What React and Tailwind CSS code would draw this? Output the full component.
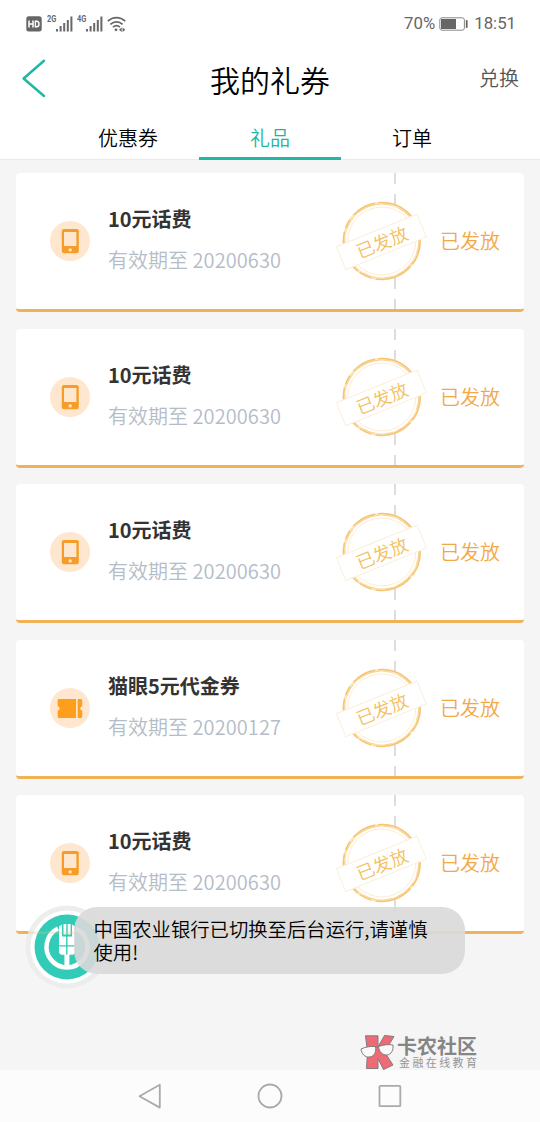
import React from "react";

const coupons = [
  { title: "10元话费", date: "20200630", icon: "phone" },
  { title: "10元话费", date: "20200630", icon: "phone" },
  { title: "10元话费", date: "20200630", icon: "phone" },
  { title: "猫眼5元代金券", date: "20200127", icon: "ticket" },
  { title: "10元话费", date: "20200630", icon: "phone" },
];

function Signal({ label }) {
  return (
    <div className="flex h-4 w-[26px]">
      <span className="mt-[-1px] h-[9px] w-[9px] origin-left scale-x-[0.82] font-['Roboto','Noto_Sans_CJK_SC',sans-serif] text-[9px] leading-[9px] font-bold text-[#666]">
        {label}
      </span>
      <svg width="17" height="16" viewBox="0 0 17 16" fill="#686868" className="shrink-0">
        <rect x="0" y="13" width="2" height="2.5" />
        <rect x="3.6" y="10" width="2" height="5.5" />
        <rect x="7.2" y="7" width="2" height="8.5" />
        <rect x="10.8" y="4" width="2" height="11.5" />
        <rect x="14.4" y="0.5" width="2" height="15" />
      </svg>
    </div>
  );
}

function StatusBar() {
  return (
    <div className="flex h-[47px] items-center pr-[24px] pl-[26px] text-[#666]">
      <svg width="16" height="16" viewBox="0 0 16 16" className="mt-px">
        <rect x="0.3" y="0.3" width="15.4" height="15.2" rx="2.5" fill="#666" />
        <path d="M3 4.5v7M7 4.5v7M3 8h4" stroke="#fff" strokeWidth="1.5" fill="none" />
        <path d="M9.4 5.2v5.6h1.2c1.7 0 2.4-.9 2.4-2.8s-.7-2.8-2.4-2.8z" stroke="#fff" strokeWidth="1.4" fill="none" />
      </svg>
      <div className="ml-[5px]"><Signal label="2G" /></div>
      <div className="ml-[4px]"><Signal label="4G" /></div>
      <svg width="19" height="16" viewBox="0 0 19 16" className="ml-[4px]" fill="none" stroke="#666" strokeWidth="1.7">
        <path d="M.8 5.200c5-4.800 12.400-4.800 17.400 0M3.400 8.400c3.600-3.500 8.600-3.500 12.200 0M6 11.200c2.100-2 4.900-2 7 0" />
        <circle cx="9" cy="13.8" r="1.4" fill="#666" stroke="none" />
        <path d="M14.700 11.400 12 13.700l2.700 2.300zM15.600 11.400l2.700 2.300-2.700 2.300z" fill="#666" stroke="none" />
      </svg>
      <div className="ml-auto flex items-center font-['Roboto','Noto_Sans_CJK_SC',sans-serif] text-[16.8px] leading-none">
        <span>70%</span>
        <svg width="29" height="14" viewBox="0 0 29 14" className="mt-px mr-[6px] ml-[4px]">
          <rect x="0.8" y="0.8" width="24.6" height="12.4" rx="2.2" fill="#fff" stroke="#888" />
          <rect x="2" y="2" width="15" height="10" fill="#666" />
          <rect x="26.8" y="3" width="1.8" height="8" rx="0.8" fill="#666" />
        </svg>
        <span>18:51</span>
      </div>
    </div>
  );
}

function Header() {
  return (
    <header className="grid h-[68px] grid-cols-[120px_1fr_120px] items-center">
      <svg width="26" height="40" viewBox="0 0 26 40" className="mt-[-6px] ml-[21px]" fill="none" stroke="#22b6a4" strokeWidth="2.5" strokeLinecap="round" strokeLinejoin="round">
        <path d="M23 2.8 2.6 20.500 23 38" />
      </svg>
      <h1 className="mt-[-4px] text-center text-[30px] leading-[44px] font-[350] text-black">我的礼券</h1>
      <span className="mt-[-7px] pr-[21px] text-right text-[20px] leading-7 font-[350] text-[#555]">兑换</span>
    </header>
  );
}

function Tabs() {
  return (
    <nav className="flex h-[45px] justify-center border-b border-[#e9e9e9] text-[20px] leading-[45px] font-[350] text-black">
      <span className="w-[142px] text-center">优惠券</span>
      <span className="mb-[-1px] h-[45px] w-[142px] border-b-3 border-[#22b6a4] text-center text-[#20b5a2]">礼品</span>
      <span className="w-[142px] text-center">订单</span>
    </nav>
  );
}

function CouponIcon({ type }) {
  return (
    <svg width="40" height="40" viewBox="0 0 40 40">
      <circle cx="20" cy="20" r="20" fill="#ffe6cf" />
      {type === "phone" ? (
        <g>
          <rect x="11.8" y="8" width="17" height="24.2" rx="2.2" fill="#f69d27" />
          <rect x="14" y="11" width="12.4" height="14" rx="0.6" fill="#ffe6cf" />
          <circle cx="20.2" cy="28.9" r="1.7" fill="#ffe6cf" />
        </g>
      ) : (
        <g fill="#ff9d1d">
          <path d="M9 11h17v19H9a1.300 1.300 0 0 1-1.300-1.300v-6.200a2 2 0 0 0 0-4v-6.200A1.300 1.300 0 0 1 9 11z" />
          <path d="M27.700 11h3a1.500 1.500 0 0 1 1.500 1.500v6a2 2 0 0 0 0 4v6a1.500 1.500 0 0 1-1.500 1.500h-3z" />
        </g>
      )}
    </svg>
  );
}

function Stamp() {
  return (
    <svg width="92" height="82" viewBox="0 0 92 82" className="absolute top-[27px] left-[320px]">
      <circle cx="45.8" cy="41" r="37.8" fill="#fff" stroke="#fde6bd" strokeWidth="3" />
      <circle cx="45.8" cy="41" r="38.4" fill="none" stroke="#f5c577" strokeWidth="1.5" strokeDasharray="25 3 38 5 13 2 44 4 9 6" />
      <circle cx="45.8" cy="41" r="37" fill="none" stroke="#f8d08c" strokeWidth="0.9" strokeDasharray="13 8 22 5 6 10" />
      <circle cx="45.8" cy="41" r="34" fill="none" stroke="#fdebc9" strokeWidth="0.9" />
      <g transform="rotate(-22 45.8 41.5)">
        <rect x="1.8" y="29.300" width="87" height="24.800" fill="#fff" stroke="#fbeedb" strokeWidth="0.9" />
        <text x="45.8" y="49.2" textAnchor="middle" fontSize="18" fill="#f4bf60" className="font-['Noto_Sans_CJK_SC',sans-serif] font-[350]">已发放</text>
      </g>
    </svg>
  );
}

function Coupon({ item }) {
  return (
    <li className="relative flex h-[139px] items-start overflow-hidden rounded-[4px] border-b-3 border-[#efb257] bg-white pl-[34px]">
      <div className="mt-[48px]"><CouponIcon type={item.icon} /></div>
      <div className="mt-[31px] ml-[18px] flex flex-col gap-[12px] whitespace-nowrap">
        <h2 className="text-[20px] leading-[29px] font-bold text-[#333]">{item.title}</h2>
        <p className="text-[20px] leading-[29px] font-[350] text-[#b4bcc8]">
          有效期至 <span className="tracking-[0.1px]">{item.date}</span>
        </p>
      </div>
      <svg width="2" height="137" className="absolute top-0 left-[378px]">
        <path d="M1 0v137" stroke="#d8d8dc" strokeWidth="1.7" strokeDasharray="11 10" />
      </svg>
      <Stamp />
      <span className="mt-[53px] mr-[24px] ml-auto text-[20px] leading-[29px] font-[350] text-[#f3a847]">已发放</span>
    </li>
  );
}

function BankLogo() {
  return (
    <svg width="84" height="84" viewBox="0 0 84 84" className="absolute top-[905px] left-[25px]">
      <circle cx="42" cy="42" r="41.5" fill="#ededed" />
      <circle cx="42" cy="42" r="36.5" fill="#fff" />
      <circle cx="42" cy="42" r="32.5" fill="#32cbb8" />
      <path d="M33 23.500A20.500 20.500 0 1 0 51 23.500" fill="none" stroke="#fff" strokeWidth="4.5" />
      <g fill="#fff">
        <path d="M34 21.500 37 19.500V31.500h4.100v8.700H34zM50 21.500 47 19.500V31.500h-4.500v8.700H50z" />
        <path d="M38.500 19h2.800v10.500h-2.800zM42.700 19h2.900v10.500h-2.900z" />
        <path d="M34 41.500h7.100v8.200H36L34 47.800zM42.500 41.500H50v6.300l-2 1.900h-5.500zM39.400 49.500h5V63h-5z" />
      </g>
      <path d="M3 27.700h46" stroke="#e8bd66" strokeWidth="2.6" opacity="0.28" />
    </svg>
  );
}

function Watermark() {
  return (
    <div className="absolute top-[1034px] left-[360px] flex">
      <svg width="36" height="36" viewBox="0 0 36 36" className="shrink-0" stroke="#857a7a" strokeWidth="1" strokeLinejoin="round">
        <path d="M5.500 1.800H18v11L24.500 1.500l9.500 1-9.500 15.500 8.500 13-9.500 4.500-5.500-11v10H6.500L7.500 18z" fill="#ed6b77" />
        <path d="M1 15c4-2 10-3 14.500-2.500 1 5-1 10-6 10.500-4.500.5-8-3-8.500-8z" fill="#fafafa" />
        <path d="M18.500 12.500c5-1.800 10-2.300 14.500-1.500.5 5-1.500 9.500-6 10-4.500.5-8-3.500-8.500-8.500z" fill="#fafafa" />
        <path d="M15.500 13.500c1-.8 2-.8 3 0" fill="none" />
      </svg>
      <div className="ml-px flex flex-col whitespace-nowrap">
        <span className="h-[21px] text-[20px] leading-[23px] font-bold text-[#858585]">卡农社区</span>
        <span className="ml-[2px] text-[11px] leading-[14px] tracking-[2.400px] text-[#959595]">金融在线教育</span>
      </div>
    </div>
  );
}

function NavBar() {
  return (
    <div className="flex h-[52px] items-center justify-center gap-[94px] bg-[#fcfcfc]">
      <svg width="26" height="28" viewBox="0 0 26 28" fill="none" stroke="#aaa" strokeWidth="1.8" strokeLinejoin="round">
        <path d="M22.800 2.800v22.800L2.500 14.200z" />
      </svg>
      <svg width="26" height="28" viewBox="0 0 26 28" fill="none" stroke="#aaa" strokeWidth="1.8">
        <circle cx="13" cy="14" r="11.500" />
      </svg>
      <svg width="26" height="28" viewBox="0 0 26 28" fill="none" stroke="#aaa" strokeWidth="1.8">
        <rect x="2.500" y="3.800" width="20.800" height="20.400" rx="0.8" />
      </svg>
    </div>
  );
}

export default function App() {
  return (
    <div className="relative flex h-[1122px] w-[540px] flex-col overflow-hidden bg-[#f5f5f5] font-['Noto_Sans_CJK_SC',sans-serif]">
      <div className="bg-white">
        <StatusBar />
        <Header />
        <Tabs />
      </div>
      <ul className="flex flex-1 flex-col gap-[16.400px] pr-[16px] pl-[16px] pt-[13.400px]">
        {coupons.map((item, i) => (
          <Coupon key={i} item={item} />
        ))}
      </ul>
      <NavBar />
      <BankLogo />
      <div className="absolute top-[907px] left-[74px] h-[67px] w-[391px] rounded-[23px] bg-[#d9d9d9]/90 pt-[11px] pl-[19.500px] text-[19.350px] leading-[23px] font-[350] whitespace-nowrap text-black">
        中国农业银行已切换至后台运行,请谨慎
        <br />
        使用!
      </div>
      <Watermark />
    </div>
  );
}
